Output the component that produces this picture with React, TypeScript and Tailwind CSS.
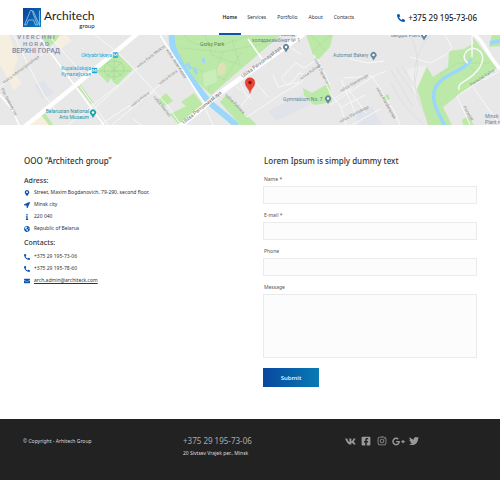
import type { ReactNode } from "react";
import {
  FaEnvelope,
  FaFacebookSquare,
  FaGlobeAmericas,
  FaGooglePlusG,
  FaInfo,
  FaInstagram,
  FaLocationArrow,
  FaMapMarkerAlt,
  FaPhoneAlt,
  FaTwitter,
  FaVk,
} from "react-icons/fa";

const navItems = ["Services", "Portfolio", "About", "Contacts"];

const address = [
  { icon: <FaMapMarkerAlt />, text: "Street, Maxim Bogdanovich, 79-290, second floor." },
  { icon: <FaLocationArrow />, text: "Minsk city" },
  { icon: <FaInfo />, text: "220 040" },
  { icon: <FaGlobeAmericas />, text: "Republic of Belarus" },
];

const socials = [
  { name: "VK", icon: <FaVk className="shrink-0 text-[11px]" /> },
  { name: "Facebook", icon: <FaFacebookSquare /> },
  { name: "Instagram", icon: <FaInstagram /> },
  { name: "Google Plus", icon: <FaGooglePlusG className="shrink-0 text-[13px]" /> },
  { name: "Twitter", icon: <FaTwitter /> },
];

function Logo() {
  return (
    <a href="#" className="flex items-center gap-[3px] text-[#222]">
      <svg viewBox="0 0 36 38" className="h-[19px] w-[18px]">
        <defs>
          <linearGradient id="logo" x1="0" y1="0" x2="1" y2="1">
            <stop offset="0" stopColor="#0b3f98" />
            <stop offset="1" stopColor="#0b7fc4" />
          </linearGradient>
        </defs>
        <rect width="36" height="38" fill="url(#logo)" />
        <g fill="none" stroke="#a9d0ee" strokeWidth="1.5">
          <path d="M3 34L15 5H18L29 34H25L21 24H11L7 34Z" />
          <path d="M20 5L33 35V5" />
        </g>
      </svg>
      <span className="flex flex-col items-end pt-[2px] font-['Lato',sans-serif]">
        <span className="text-[12px] leading-[13px]">Architech</span>
        <span className="text-[6px] leading-[7px]">group</span>
      </span>
    </a>
  );
}

function Header() {
  return (
    <header className="flex h-[35px] items-center bg-white px-[23px]">
      <Logo />
      <nav className="ml-auto flex h-full items-center gap-[6px] text-[5px] text-[#333]">
        <a
          href="#"
          className="flex h-full items-center border-y-2 border-t-transparent border-b-[#0a56ad] px-1 font-semibold text-[#222]"
        >
          Home
        </a>
        <div className="flex gap-[11px]">
          {navItems.map((item) => (
            <a key={item} href="#">
              {item}
            </a>
          ))}
        </div>
      </nav>
      <a href="tel:+375291957306" className="ml-[43px] flex items-center gap-[3px] text-[8px] font-medium text-[#222]">
        <FaPhoneAlt className="size-[8px] text-[#0a56ad]" />
        +375 29 195-73-06
      </a>
    </header>
  );
}

function CityMap() {
  return (
    <svg
      viewBox="0 0 500 90"
      preserveAspectRatio="xMidYMid slice"
      className="block h-[90px] w-full bg-[#e8e8e8] font-['Roboto',sans-serif]"
      role="img"
      aria-label="Map of Minsk"
    >
      {/* built-up areas */}
      <g fill="#f6efdf">
        <path d="M0 0H9L18 24L13 36L22 48L14 55L0 30Z" />
        <path d="M50 3L66 0L72 6L60 14Z" />
        <path d="M35 80L43 76L50 90H32Z" />
        <path d="M407 34L426 30L418 52L416 66Z" fill="#eeeeec" />
      </g>
      <path d="M34 50L44 46L54 58L42 64ZM355 78L372 72L382 90H358ZM268 76L310 56L318 66L276 86Z" fill="#e0e4ea" />

      {/* parks */}
      <g fill="#bce8a8">
        <path d="M44 0H60L55 7L49 12L42 3Z" />
        <path d="M96 36L115 16L133 34L117 50L113 47L111 43L108 48Z" />
        <path d="M77 51L80 49L94 68L91 69Z" />
        <path d="M41 80L45 78L53 90H49Z" />
        <path d="M158 65L166 58L173 66L163 72Z" />
        <path d="M172 0H281L262 16L211 60L190 40L175 20Z" />
        <path d="M181 67L194 58L203 70L179 90L170 79L186 71Z" />
        <path d="M220 67L226 60L257 90H240Z" />
        <path d="M306 0H333L330 12L318 25L313 20Z" />
        <path d="M303 53L312 58L329 48L332 67L314 70L304 60Z" />
        <path d="M471 0L497 33L462 57L443 72L452 90H428L417 54L427 32L433 42L448 32L449 16L464 14L474 8Z" />
        <path d="M489 12L492 0H500V11Z" />
        <path d="M384 61L388 59L390 64L386 66Z" />
        <path d="M462 85L468 81L474 90H463Z" />
      </g>

      {/* park paths and grounds */}
      <g fill="none" stroke="#a5d596" strokeWidth=".6" strokeDasharray="2 1">
        <path d="M184 0C194 15 221 13 250 0M181 13L222 17L262 9M232 4L240 31M205 0L212 20L240 30M180 28L226 45M223 17L208 56M242 16L224 45" />
        <path d="M311 0L326 16M331 0L312 17M440 40L457 28L490 28M459 20L477 39" />
      </g>
      <g fill="none" stroke="#a5d596" strokeWidth=".7">
        <ellipse cx="114" cy="34" rx="10" ry="8" />
        <path d="M99 36H131M114 18V45M107 28L122 41M122 27L106 42" />
      </g>
      <path d="M203 38L216 34L217 47L204 52Z" fill="#c9edbb" />
      <ellipse cx="221.5" cy="34" rx="4.5" ry="6.5" fill="#dde2b4" transform="rotate(10 222 34)" />

      {/* river */}
      <g fill="none" stroke="#9bd7fb">
        <path d="M172 -1C170 12 178 26 189 41L205 62C213 73 222 76 237 91" strokeWidth="6" />
        <path d="M187 28L191 34M194 33L197 39M203 23L204 28" strokeWidth="3" />
        <path d="M471 24C466 34 454 36 443 44C425 57 437 76 445 91" strokeWidth="3.5" />
        <path d="M490 8L500 6" strokeWidth="4" />
      </g>

      {/* minor streets */}
      <g fill="none" stroke="#f8f8f8" strokeWidth="1">
        <path d="M0 52L36 24L54 11M14 0L28 30L44 60L56 76M48 0L84 40M95 0L117 17L136 36L167 70L181 90M118 50L78 82L68 90M165 10L137 34L96 72M178 35L150 58L112 90M133 84L141 90M100 90L124 74L154 57M79 50L108 90" />
        <path d="M203 69L213 90M240 48L246 60L252 64M242 56L236 51M254 45L268 62M250 60L240 72L247 82L283 58L300 48M262 24L290 12L302 20M281 43L296 28L304 33L318 24L330 50M282 44L287 50L294 45L299 38L305 40L301 48M273 40L278 52L300 47M314 20L330 58L341 72L346 90" />
        <path d="M330 70L374 41M341 44L356 80M344 43L372 41L394 76L400 90M349 55L366 78M335 63L352 53M342 72L365 60M372 42L386 36M352 90L380 74M410 22L430 28L445 20M445 0L452 13L446 20M350 24L368 28L384 26" />
        <path d="M457 61L500 33M457 61L470 90M473 52L500 90M484 45L500 36" />
        <path d="M472 0V22M459 55C456 46 470 48 480 32C488 18 476 10 468 15C462 20 464 26 468 28" strokeWidth="1.5" />
      </g>

      {/* rail lines */}
      <g fill="none" stroke="#d8d8d8" strokeWidth=".6">
        <path d="M430 0Q405 30 420 69L430 91M410 0Q422 20 415 48M391 35L413 72M396 33L419 66M401 30L421 62M391 48Q402 72 424 90" />
      </g>

      {/* main avenues */}
      <g fill="none" stroke="#fff">
        <path d="M23 93L77 49L138 -2" strokeWidth="4.5" />
        <path d="M178 93L220 58L305 -2" strokeWidth="5" />
        <path d="M472 -2C484 5 487 20 500 34" strokeWidth="3.5" />
        <path d="M0 60L12 74L19 90M37 0L50 17L104 90M160 0L204 68M248 4L262 24" strokeWidth="1.5" />
      </g>

      {/* street names */}
      <g fill="#8a8a8a" fontSize="4">
        <text transform="translate(4 49) rotate(-37)">Vulica Internacyjanaĺnaja</text>
        <text transform="translate(1 54) rotate(63)">Plac Svabody Val</text>
        <text transform="translate(138 33) rotate(-38)">vulica Karla Marksa</text>
        <text transform="translate(160 50) rotate(-37)">vulica Kirava</text>
        <text transform="translate(132 72) rotate(-37)">vulica Kirava</text>
        <text transform="translate(153 62) rotate(51)">vulica Internac</text>
        <text transform="translate(166 15) rotate(57)">vulica Janki Kupaly</text>
        <text transform="translate(225 60) rotate(46)">vulica Puličava</text>
        <text transform="translate(301 45) rotate(-35)">vulica Kuĺman</text>
        <text transform="translate(314 24) rotate(64)">vulica Čapajeva</text>
        <text transform="translate(341 57) rotate(-30)">vulica Slasiennaja</text>
        <text transform="translate(376 53) rotate(60)">vulica Aranžarejnaja</text>
        <text transform="translate(340 88) rotate(-28)">vulica Slavinskaga</text>
        <text transform="translate(471 51) rotate(-32)">Pieraulak Kaliny</text>
        <text transform="translate(463 72) rotate(59)">Pieraulak</text>
      </g>
      <g fill="#666" fontSize="5">
        <text transform="translate(184 89) rotate(-39)">Ulitsa Pervomayskaya</text>
        <text transform="translate(243 43) rotate(-37)">Ulitsa Pervomayskaya</text>
      </g>

      {/* districts and places */}
      <g fill="#7f8aa8" textAnchor="middle" fontWeight="500">
        <g fontSize="6">
          <text x="36" y="4">V I E R C H N I</text>
          <text x="36" y="11">H O R A D</text>
        </g>
        <text x="36" y="18" fontSize="7">
          ВЕРХНІ ГОРАД
        </text>
      </g>
      <g fill="#20a5d8" fontSize="5" textAnchor="end">
        <text x="112" y="22">Oktyabr’skaya</text>
        <text x="91" y="35">Kupalaŭskaja</text>
        <text x="91" y="41">Купалаўская</text>
      </g>
      <g fill="#1d94a4" fontSize="5" textAnchor="end">
        <text x="89" y="78">Belarusian National</text>
        <text x="89" y="84">Arts Museum</text>
      </g>
      <text x="200" y="11" fill="#528b52" fontSize="5">
        Gorky Park
      </text>
      <g fill="#64879d" fontSize="5">
        <text x="281" y="1">завод</text>
        <text x="252" y="7">холадакамбінат № 1</text>
        <text x="333" y="22">Automat Bakery</text>
        <text x="391" y="2">Belgips Plant</text>
        <text x="283" y="66">Gymnasium No. 7</text>
        <text x="485" y="83">Minsk</text>
        <text x="485" y="89">Plant n</text>
      </g>

      {/* metro stops */}
      {[
        [115.5, 20],
        [94.5, 35.5],
      ].map(([x, y]) => (
        <g key={x} transform={`translate(${x} ${y})`}>
          <rect x="-2.7" y="-2.7" width="5.4" height="5.4" rx=".8" fill="#20a5d8" />
          <path d="M-1.5 1.5V-1.5L0 .7L1.5 -1.5V1.5" fill="none" stroke="#fff" strokeWidth=".8" />
        </g>
      ))}

      {/* place pins */}
      {[
        [286, 12, "#64879d"],
        [373.5, 20, "#64879d"],
        [328, 63.5, "#64879d"],
        [424, 0, "#64879d"],
        [93, 77.5, "#1da4aa"],
      ].map(([x, y, color]) => (
        <g key={x} transform={`translate(${x} ${y})`}>
          <path d="M0 5.5L-2 2.2A3 3 0 1 1 2 2.2Z" fill={color as string} />
          <circle r="1.2" fill="#fff" />
        </g>
      ))}

      {/* office */}
      <path
        d="M250 58.5C249.5 54 245.2 52 245.2 47.5A4.8 4.8 0 0 1 254.8 47.5C254.8 52 250.5 54 250 58.5Z"
        fill="#ea4335"
        stroke="#c5332a"
        strokeWidth=".4"
      />
      <circle cx="250" cy="47.5" r="1.7" fill="#7a1712" />
    </svg>
  );
}

function InfoRow({ icon, children }: { icon: ReactNode; children: ReactNode }) {
  return (
    <li className="flex h-3 items-center gap-1">
      <span className="flex w-[6px] justify-center text-[6px] text-[#0a56ad]">{icon}</span>
      {children}
    </li>
  );
}

function Info() {
  return (
    <section className="pl-px text-[5px] text-[#333]">
      <h1 className="text-[8px] leading-3 font-medium">OOO “Architech group”</h1>
      <h2 className="mt-2 text-[7px] leading-3 font-medium">Adress:</h2>
      <ul>
        {address.map((row) => (
          <InfoRow key={row.text} icon={row.icon}>
            {row.text}
          </InfoRow>
        ))}
      </ul>
      <h2 className="mt-[2px] text-[7px] leading-3 font-medium">Contacts:</h2>
      <ul className="pt-[2px]">
        <InfoRow icon={<FaPhoneAlt />}>
          <a href="tel:+375291957306">+375 29 195-73-06</a>
        </InfoRow>
        <InfoRow icon={<FaPhoneAlt />}>
          <a href="tel:+375291957860">+375 29 195-78-60</a>
        </InfoRow>
        <InfoRow icon={<FaEnvelope />}>
          <a href="mailto:arch.admin@architeck.com" className="underline">
            arch.admin@architeck.com
          </a>
        </InfoRow>
      </ul>
    </section>
  );
}

function Field({ id, label, type = "text" }: { id: string; label: string; type?: string }) {
  return (
    <div className="flex flex-col gap-[3px]">
      <label htmlFor={id} className="pl-px">
        {label}
      </label>
      <input id={id} type={type} className="h-[18px] border border-[#ebebeb] bg-[#fcfcfc] px-1" />
    </div>
  );
}

function ContactForm() {
  return (
    <section>
      <h2 className="pl-px text-[8px] leading-3 font-medium text-[#333]">Lorem Ipsum is simply dummy text</h2>
      <form className="mt-2 flex flex-col gap-[7px] text-[5px] leading-[8px] text-[#555]">
        <Field id="name" label="Name *" />
        <Field id="email" label="E-mail *" type="email" />
        <Field id="phone" label="Phone" type="tel" />
        <div className="flex flex-col gap-[3px]">
          <label htmlFor="message" className="pl-px">
            Message
          </label>
          <textarea id="message" className="h-16 resize-none border border-[#ebebeb] bg-[#fcfcfc] px-1" />
        </div>
        <button
          type="button"
          className="mt-[3px] h-[19px] w-14 bg-linear-to-r from-[#0b479f] to-[#0a7ab4] text-[6px] font-medium text-white"
        >
          Submit
        </button>
      </form>
    </section>
  );
}

function Footer() {
  return (
    <footer className="grid grid-cols-3 gap-x-[26px] bg-[#222] px-[23px] pt-4 pb-[21px] text-[5px] leading-3 text-[#ddd]">
      <p>© Copyright - Arhitech Group</p>
      <div>
        <a href="tel:+375291957306" className="block text-[8px] text-[#aaa]">
          +375 29 195-73-06
        </a>
        <p>20 Sivtsev Vrajek per., Minsk</p>
      </div>
      <ul className="flex h-3 items-center gap-[6px] pl-[2px] text-[10px] text-[#999]">
        {socials.map((social) => (
          <li key={social.name}>
            <a href="#" aria-label={social.name} className="flex w-[10px] justify-center">
              {social.icon}
            </a>
          </li>
        ))}
      </ul>
    </footer>
  );
}

export default function App() {
  return (
    <div className="flex min-h-screen flex-col bg-white font-['Noto_Sans',sans-serif]">
      <Header />
      <CityMap />
      <main className="grid grow grid-cols-2 gap-[26px] px-[23px] pt-[30px] pb-8">
        <Info />
        <ContactForm />
      </main>
      <Footer />
    </div>
  );
}
